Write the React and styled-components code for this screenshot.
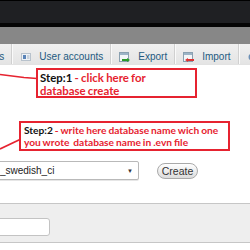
import React from 'react'
import styled, { createGlobalStyle } from 'styled-components'

const Global = createGlobalStyle`
  html, body {
    margin: 0;
    padding: 0;
    background: #fff;
  }
  #root {
    width: 250px;
    height: 250px;
    overflow: hidden;
  }
`;

const Page = styled.div`
  position: relative;
  width: 250px;
  height: 250px;
  overflow: hidden;
  font-family: "Liberation Sans", Arial, sans-serif;
`;

const TopBar = styled.div`
  height: 22px;
  background: #1f2023;
  border-top: 1px solid #000;
  border-bottom: 4px solid #050505;
`;

const GrayBand = styled.div`
  height: 17px;
  background: #878787;
`;

const TabBar = styled.div`
  display: flex;
  height: 20px;
  margin-left: -33px;
  background: linear-gradient(#f0f0f0, #e4e4e4);
  border-bottom: 1px solid #e2e2e2;
  white-space: nowrap;
`;

const Tab = styled.div`
  display: flex;
  align-items: center;
  gap: 8px;
  box-sizing: border-box;
  height: 100%;
  padding: 6px 7px 0 ${p => p.pl || 8}px;
  border-right: 1px solid #d0d0d0;
  box-shadow: 1px 0 0 #fafafa;
  color: #235a81;
  font-size: 10px;
  line-height: 12px;
`;

const Content = styled.div`
  position: relative;
  padding-top: 96px;
`;

const FormRow = styled.div`
  display: flex;
  align-items: center;
  height: 19px;
`;

const Select = styled.div`
  display: flex;
  align-items: center;
  justify-content: space-between;
  box-sizing: border-box;
  width: 168px;
  height: 19px;
  margin-left: -29px;
  padding: 0 5px 0 4px;
  border: 1px solid #b9b9b9;
  border-radius: 2px;
  background: #fff;
  box-shadow: 0 1px 0 #e6e6e6;
  font-size: 10px;
  color: #222;
`;

const Arrow = styled.span`
  font-size: 6px;
  color: #333;
`;

const Button = styled.div`
  display: flex;
  align-items: center;
  justify-content: center;
  box-sizing: border-box;
  width: 41px;
  height: 16px;
  margin-left: 18px;
  border: 1px solid #a9a9a9;
  border-radius: 8px;
  background: linear-gradient(#ffffff, #dcdcdc);
  font-size: 10.5px;
  color: #333;
`;

const Panel = styled.div`
  display: flex;
  align-items: flex-start;
  box-sizing: border-box;
  height: 40px;
  margin-top: 23px;
  padding-top: 14px;
  background: #eeeeee;
  border-top: 1px solid #c6c6c6;
  border-bottom: 1px solid #c6c6c6;
`;

const Input = styled.div`
  box-sizing: border-box;
  width: 60px;
  height: 18px;
  margin-left: -10px;
  background: #fff;
  border: 1px solid #c3c3c3;
  border-radius: 3px;
`;

const Note = styled.div`
  position: absolute;
  left: ${p => p.x}px;
  top: ${p => p.y}px;
  width: ${p => p.w}px;
  height: ${p => p.h}px;
  box-sizing: border-box;
  padding: ${p => p.pt}px 0 0 ${p => p.pl}px;
  border: 2px solid #e62330;
  background: #fff;
  font-family: Lato, "Open Sans", sans-serif;
  font-weight: 700;
  font-size: ${p => p.fs}px;
  word-spacing: -0.5px;
  line-height: ${p => p.lh}px;
  color: #e62330;
  white-space: pre;
`;

const NoteLine = styled.div``;

const StepLabel = styled.span`
  color: #111;
`;

const Lines = styled.svg`
  position: absolute;
  left: 0;
  top: 0;
  pointer-events: none;
`;

const UsersIcon = () => (
  <svg width="11" height="8" viewBox="0 0 11 8">
    <rect x="1.5" y="0.5" width="9" height="7" fill="#eef2f6" stroke="#b8c2cc" />
    <rect x="3" y="2" width="3" height="4" fill="#5a84b8" />
    <rect x="7" y="2" width="2.5" height="4" fill="#c9d2dc" />
  </svg>
);

const ExportIcon = () => (
  <svg width="11" height="11" viewBox="0 0 11 11">
    <rect x="0.5" y="0.5" width="9" height="9" fill="#f3f6f8" stroke="#8aa0b0" />
    <rect x="1" y="1" width="8" height="2" fill="#9cb4c6" />
    <path d="M3 8 H9" stroke="#2a9a2a" strokeWidth="2" />
    <path d="M8 6 L11 8 L8 10 Z" fill="#2a9a2a" />
  </svg>
);

const ImportIcon = () => (
  <svg width="11" height="11" viewBox="0 0 11 11">
    <rect x="0.5" y="0.5" width="9" height="9" fill="#f3f6f8" stroke="#8aa0b0" />
    <rect x="1" y="1" width="8" height="2" fill="#9cb4c6" />
    <path d="M4 8 H11" stroke="#d33" strokeWidth="2" />
    <path d="M5 6 L2 8 L5 10 Z" fill="#d33" />
  </svg>
);

const SettingsIcon = () => (
  <svg width="10" height="10" viewBox="0 0 10 10">
    <circle cx="5" cy="5" r="3.5" fill="#6b8fb5" />
  </svg>
);

export default function App() {
  return (
    <Page>
      <Global />
      <TopBar />
      <GrayBand />
      <TabBar>
        <Tab pl={9}>Status</Tab>
        <Tab><UsersIcon />User accounts</Tab>
        <Tab><ExportIcon />Export</Tab>
        <Tab><ImportIcon />Import</Tab>
        <Tab><SettingsIcon />Settings</Tab>
      </TabBar>
      <Content>
        <FormRow>
          <Select>
            latin1_swedish_ci
            <Arrow>▼</Arrow>
          </Select>
          <Button>Create</Button>
        </FormRow>
        <Panel>
          <Input />
        </Panel>
      </Content>

      <Lines width="250" height="250">
        <polyline points="0,74.5 24,77.5 37,78.5" fill="none" stroke="#e62330" strokeWidth="1.6" />
        <polyline points="0,149 21,139" fill="none" stroke="#e62330" strokeWidth="1.6" />
      </Lines>

      <Note x={36} y={68} w={161} h={30} pt={1} pl={2} lh={13} fs={11.4}>
        <NoteLine><StepLabel>{'Step:1 '}</StepLabel>- click here for</NoteLine>
        <NoteLine>database create</NoteLine>
      </Note>
      <Note x={19} y={121} w={211} h={30} pt={1} pl={3} lh={12} fs={10.2}>
        <NoteLine><StepLabel>{'Step:2 '}</StepLabel>- write here database name wich one</NoteLine>
        <NoteLine>{'you wrote  database name in .evn file'}</NoteLine>
      </Note>
    </Page>
  )
}
